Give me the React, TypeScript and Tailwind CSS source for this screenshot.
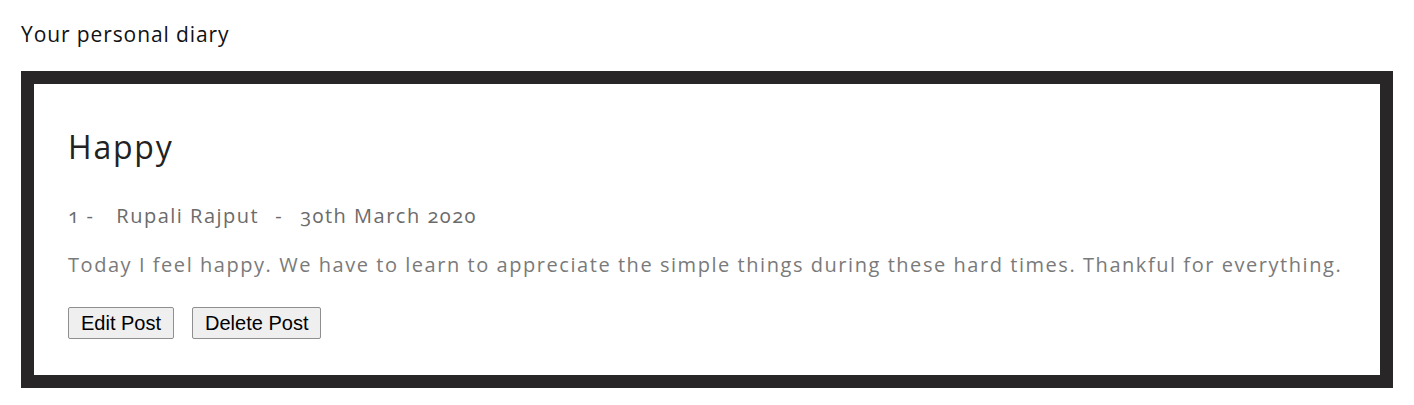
const POST = {
  id: 1,
  title: "Happy",
  author: "Rupali Rajput",
  date: "30th March 2020",
  body: "Today I feel happy. We have to learn to appreciate the simple things during these hard times. Thankful for everything.",
};

const App = () => {
  return (
    <div className="min-h-[405px] bg-white px-[21px] pt-[20px] font-['Open_Sans',sans-serif]">
      <p className="text-[21px] leading-[28px] tracking-[0.9px] text-[#111]">Your personal diary</p>

      <div className="mt-[23px] border-[13px] border-[#282627] bg-white px-[34px] pt-[43px] pb-[36px]">
        <h1 className="text-[32px] leading-[40px] tracking-[1.8px] text-[#222]">{POST.title}</h1>

        <p className="mt-[35px] text-[20px] leading-[28px] tracking-[1.5px] text-[#6b6b6b] whitespace-nowrap oldstyle-nums">
          <span>{POST.id}</span>
          <span className="ml-[6px]">-</span>
          <span className="ml-[22px]">{POST.author}</span>
          <span className="ml-[16px]">-</span>
          <span className="ml-[17px]">{POST.date}</span>
        </p>

        <p className="mt-[21px] text-[20px] leading-[28px] tracking-[1.55px] text-[#7a7a7a] whitespace-nowrap">
          {POST.body}
        </p>

        <div className="mt-[28px] flex gap-[18px] font-['Liberation_Sans',Arial,sans-serif]">
          <button className="h-[32px] rounded-[2px] border border-[#8f8f8f] bg-[#efefef] px-[12px] text-[20px] text-black">
            Edit Post
          </button>
          <button className="h-[32px] rounded-[2px] border border-[#8f8f8f] bg-[#efefef] px-[12px] text-[20px] text-black">
            Delete Post
          </button>
        </div>
      </div>
    </div>
  );
};

export default App;
